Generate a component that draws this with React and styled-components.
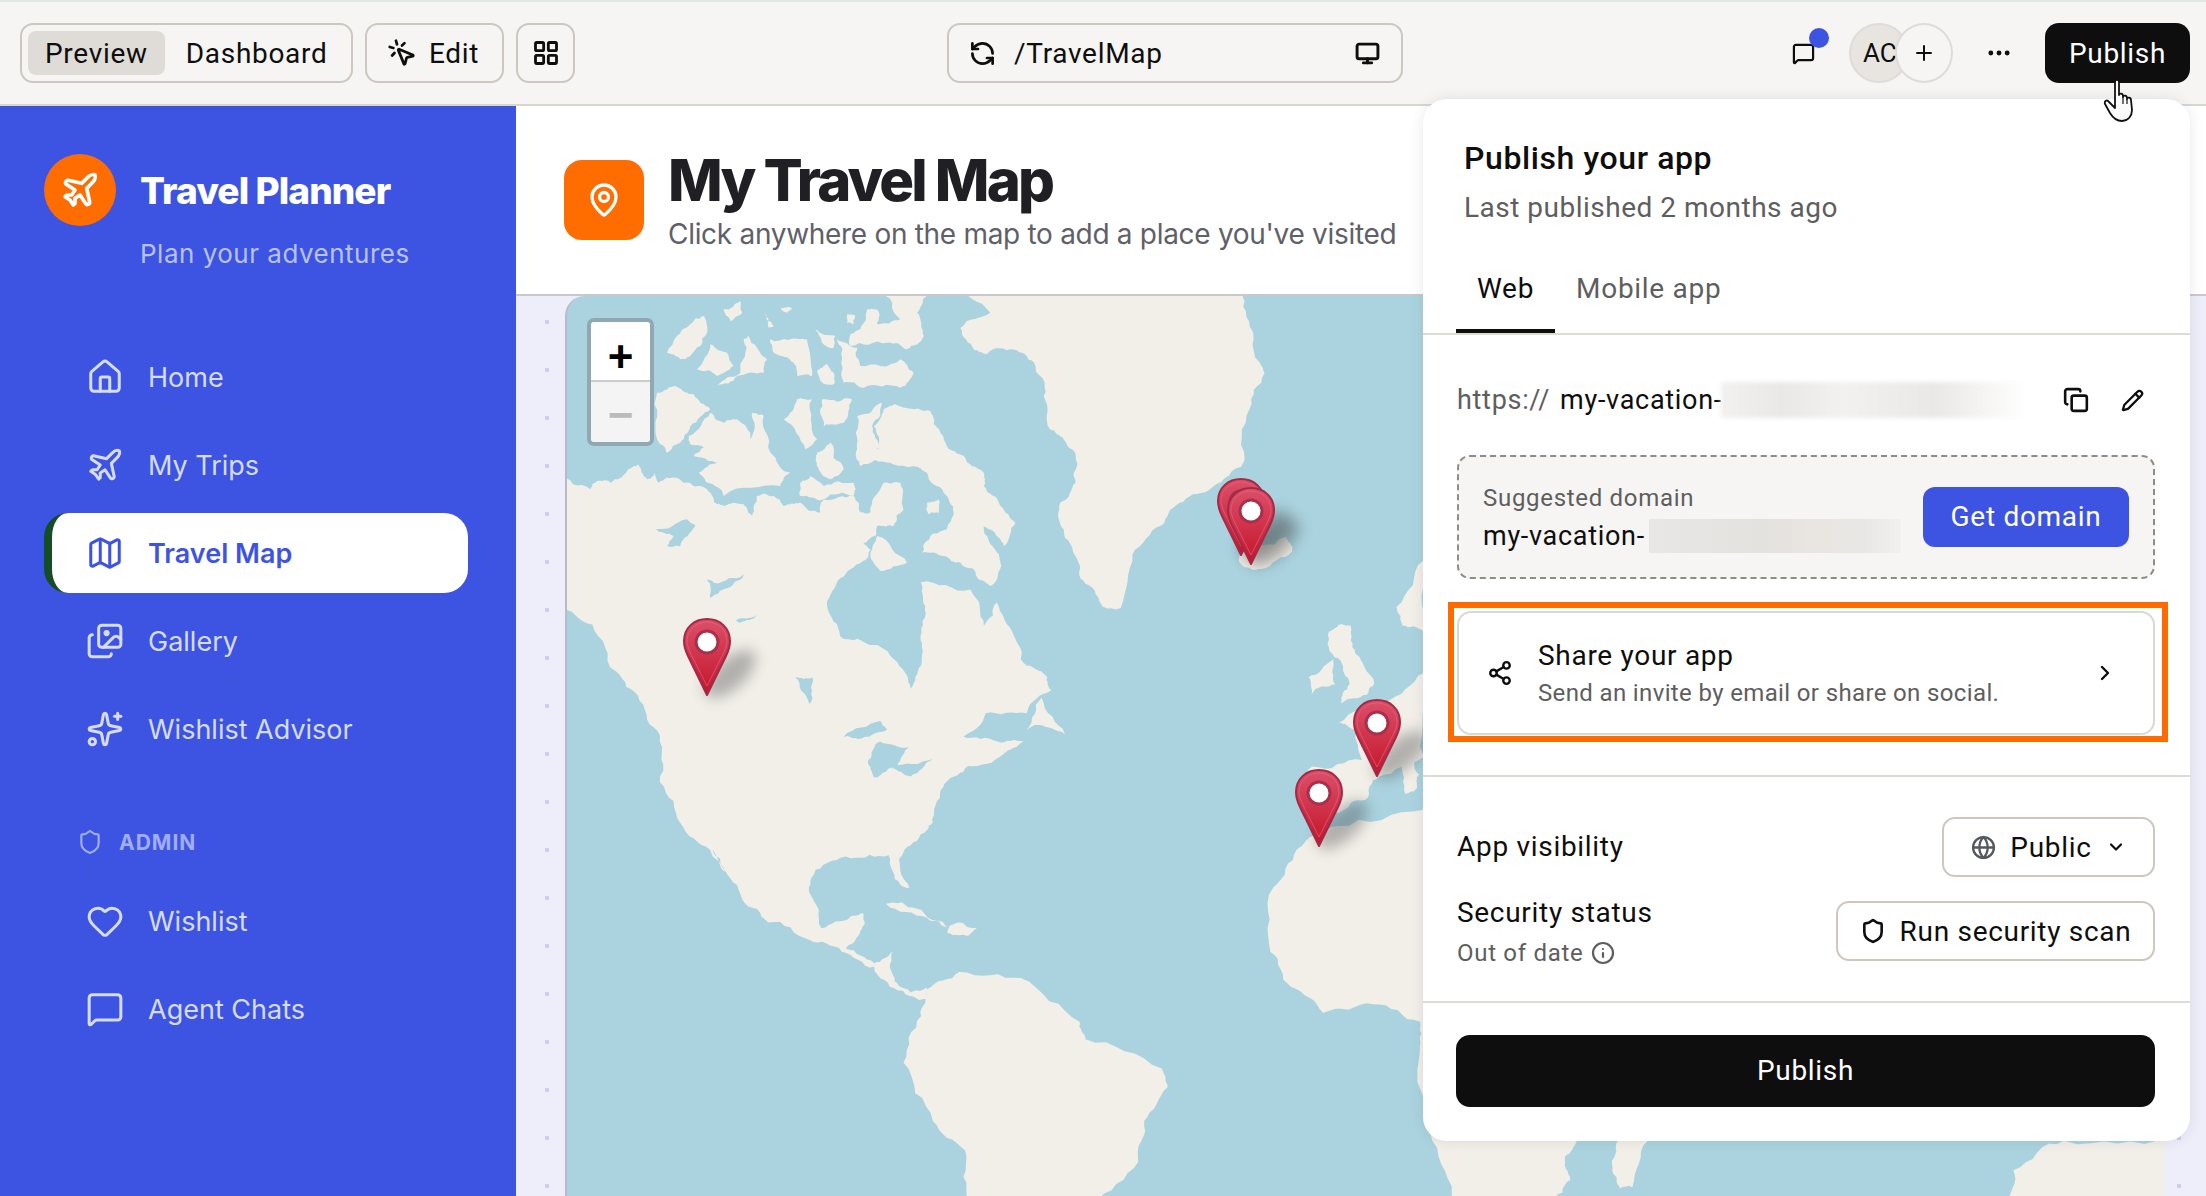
import React from "react"
import styled, { createGlobalStyle } from "styled-components"
import {
  ChevronDown, ChevronRight, Copy, Ellipsis, Globe, Heart, House, Images, Info, LayoutGrid, Map as MapIcon,
  MapPin, MessageSquare, Monitor, MousePointerClick, Pencil, Plane, Plus, RefreshCcw, Share2, Shield, Sparkles,
} from "lucide-react"

const Global = createGlobalStyle`
  html, body { margin: 0; height: 100%; background: #fff; overflow: hidden; }
  #root { height: 100%; }
  * { box-sizing: border-box; }
`

const UI = `"Roboto", "Liberation Sans", sans-serif`
const BRAND = `"Inter", "Liberation Sans", sans-serif`

// land shapes, traced in the coordinates of the map crop
const LAND = [
  "60,335 116,358 128,344 151,347 179,327 199,316 213,341 227,330 233,347 247,338 276,347 315,358 327,381 344,387 378,384 392,404 400,370 429,370 446,387 474,381 508,398 514,376 565,370 577,398 594,398 616,347 645,347 650,393 633,421 605,421 602,438 582,450 594,461 560,495 531,530 520,558 542,610 600,625 640,655 662,700 680,660 679,610 687,558 679,518 764,530 787,592 809,552 838,609 850,650 895,680 902,702 860,742 790,742 752,782 810,790 855,790 820,812 760,832 720,862 702,912 690,942 652,975 642,992 660,1040 645,1036 625,985 560,990 500,1010 490,1050 510,1110 560,1090 582,1085 575,1120 552,1145 600,1170 632,1150 632,1190 662,1220 690,1212 692,1232 660,1226 640,1216 600,1176 545,1150 490,1130 420,1100 375,1060 320,975 270,930 235,860 235,780 200,720 160,670 120,590 60,565",
  "690,1215 745,1185 850,1195 950,1270 960,1300 1090,1350 1100,1382 1060,1440 1050,1510 970,1580 760,1580 755,1490 700,1440 650,1340 680,1260",
  "730,10 1230,10 1240,80 1265,160 1240,220 1225,320 1170,360 1120,382 1090,420 1040,470 1020,562 990,560 960,520 946,478 923,427 917,381 943,347 946,313 923,273 900,256 889,199 872,141 838,119 792,127 770,119 747,82 798,56",
  "860,770 885,715 925,778 880,762",
  "620,1068 672,1076 730,1110 690,1092",
  "730,1105 775,1110 762,1122 725,1118",
  "1222,470 1300,440 1312,465 1260,495 1225,486",
  "1490,560 1536,480 1536,602 1500,592",
  "1375,602 1392,590 1412,592 1420,640 1452,690 1440,710 1395,725 1410,692 1395,652 1375,632",
  "1340,680 1382,650 1386,692 1345,710",
  "1536,673 1471,725 1391,759 1420,770 1431,822 1346,833 1320,879 1391,913 1437,890 1460,850 1536,816",
  "1390,935 1320,975 1280,1040 1275,1150 1310,1210 1365,1255 1450,1240 1530,1270 1530,1310 1551,1474 1585,1580 1755,1580 1786,1541 1777,1501 1798,1474 1850,1300 1900,1000 1536,907",
  "1867,1474 1918,1474 1892,1553 1871,1555 1858,1520",
  "2627,1474 2541,1524 2532,1580 2810,1580 2810,1474",
  "1495,825 1520,825 1525,870 1505,880",
]

// bays and lakes laid over the land
const WATER = [
  "325,975 375,1060 345,1010",
  "548,782 610,755 622,770 572,786",
  "590,822 610,790 660,800 640,832 600,852",
  "630,836 700,820 662,850",
  "465,680 495,680 490,726",
]

// arctic islands, traced closer in: one unit here is a third of a page pixel
const ARCTIC = [
  "985,325 1015,335 1090,345 1100,385 1130,430 1190,480 1250,530 1250,570 1300,630 1345,680 1310,750 1270,700 1250,690 1290,770 1300,800 1270,870 1220,820 1180,800 1130,780 1065,770 1070,745 1140,700 1160,650 1130,590 1080,530 1040,510 970,500 880,510 870,460 940,460 920,390 950,340",
  "870,360 945,320 915,390 940,460 870,460",
  "270,290 330,272 380,295 430,340 370,390 340,440 300,470 270,430",
  "365,420 430,350 470,380 510,370 550,430 555,350 590,360 620,480 670,530 640,570 470,600 420,560 395,530 470,500 380,480 410,455 370,445",
  "650,370 690,310 735,310 750,430 715,460",
  "765,310 855,310 830,380 790,385 770,390",
  "750,470 790,440 830,520 790,550 750,510",
  "700,560 730,540 770,570 860,560 860,600 770,610 700,600",
  "450,270 520,230 530,130 545,120 600,190 590,230 510,240",
  "390,220 430,145 480,170 500,210 450,240",
  "300,170 370,85 410,60 420,110 370,180 340,190",
  "470,40 520,15 525,50 490,75",
  "590,45 620,90 605,95",
  "640,35 675,35 660,50",
  "610,130 670,130 720,130 735,240 690,240 680,200 620,170",
  "745,100 805,120 800,155 765,140",
  "750,225 780,205 800,230 800,265 760,255",
  "810,130 870,155 880,210 1000,190 1040,230 1000,275 890,275 830,260 825,190",
  "850,115 880,100 900,40 930,40 930,85 1000,70 940,-20 1100,-20 1050,50 1070,120 1020,160 960,140 850,150",
  "840,55 865,60 860,85 840,80",
  "910,775 930,720 1020,800 940,825",
]

const ARCTIC_LAKES = [
  "1080,620 1115,610 1115,650 1085,655",
]

const CANADA_LAKES = [
  "265,700 360,670 385,690 340,750 300,750 320,720",
  "420,850 440,860 530,835 470,880 430,905",
  "505,975 570,955 520,980",
]

// fixed seed so the coastline comes out the same on every load
let seed = 41
const nextRandom = () => {
  seed = (seed * 1664525 + 1013904223) % 4294967296
  return seed / 4294967296 - 0.5
}

const roughen = (points, cap) => {
  let pts = points.split(" ").map((p) => p.split(",").map(Number))
  for (let round = 0; round < 3; round++) {
    const next = []
    pts.forEach(([x, y], i) => {
      const [nx, ny] = pts[(i + 1) % pts.length]
      const len = Math.hypot(nx - x, ny - y) || 1
      const shift = Math.min(len * 0.3, cap) * nextRandom()
      next.push([x, y], [(x + nx) / 2 + ((ny - y) / len) * shift, (y + ny) / 2 - ((nx - x) / len) * shift])
    })
    pts = next
  }
  return pts.map((p) => p.map((v) => v.toFixed(1)).join(",")).join(" ")
}

const LAND_SHAPES = LAND.map((p) => roughen(p, 14))
const WATER_SHAPES = WATER.map((p) => roughen(p, 6))
const ARCTIC_SHAPES = ARCTIC.map((p) => roughen(p, 26))
const ARCTIC_LAND_BITS = ARCTIC_LAKES.map((p) => roughen(p, 10))
const LAKE_SHAPES = CANADA_LAKES.map((p) => roughen(p, 14))

const PINS = [
  { x: 705, y: 696 },
  { x: 1239, y: 556 },
  { x: 1249, y: 565 },
  { x: 1375, y: 777 },
  { x: 1317, y: 847 },
]

const NAV_TOP = [
  { label: "Home", icon: House },
  { label: "My Trips", icon: Plane },
  { label: "Travel Map", icon: MapIcon, active: true },
  { label: "Gallery", icon: Images },
  { label: "Wishlist Advisor", icon: Sparkles },
]

const NAV_ADMIN = [
  { label: "Wishlist", icon: Heart },
  { label: "Agent Chats", icon: MessageSquare },
]

const Pin = ({ x, y }) => (
  <PinMark $x={x - 565 - 24} $y={y - 296 - 78} width="48" height="78" viewBox="0 0 48 78">
    <ellipse cx="47" cy="56" rx="32" ry="15" transform="rotate(-42 47 56)" fill="#3f3f3f" opacity=".36" filter="url(#pinBlur)" />
    <path d="M24 77 L5 38 C1 30 1 25 1 23 C1 10 11 1 24 1 C37 1 47 10 47 23 C47 25 47 30 43 38 Z" fill="url(#pinFill)" stroke="#a32a46" strokeWidth="2" strokeLinejoin="round" />
    <path d="M24 68 L8 36 C5 30 4 26 4 23 C4 12 13 4 24 4 C35 4 44 12 44 23 C44 26 43 30 40 36 Z" fill="none" stroke="#e56a80" strokeWidth="1" opacity=".6" />
    <circle cx="24" cy="24" r="11" fill="#fff" stroke="#a8304c" strokeWidth="3" />
  </PinMark>
)

const MapArt = () => (
  <MapSvg viewBox="76.7 27.4 2726 1541" preserveAspectRatio="none">
    <defs>
      <linearGradient id="pinFill" x1="0" y1="0" x2="0" y2="1">
        <stop offset="0" stopColor="#dc4f69" />
        <stop offset="1" stopColor="#c3152b" />
      </linearGradient>
      <filter id="pinBlur" x="-50%" y="-50%" width="200%" height="200%">
        <feGaussianBlur stdDeviation="7" />
      </filter>
      <filter id="soft">
        <feGaussianBlur stdDeviation="1" />
      </filter>
    </defs>
    <g filter="url(#soft)">
      {LAND_SHAPES.map((points) => <polygon key={points} points={points} fill="#f2efe9" />)}
      {WATER_SHAPES.map((points) => <polygon key={points} points={points} fill="#aad3df" />)}
      <g transform="translate(76.7 27.4) scale(0.568 0.5707)">
        {ARCTIC_SHAPES.map((points) => <polygon key={points} points={points} fill="#f2efe9" />)}
        {ARCTIC_LAND_BITS.map((points) => <polygon key={points} points={points} fill="#f2efe9" />)}
        {LAKE_SHAPES.map((points) => <polygon key={points} points={points} fill="#aad3df" />)}
      </g>
    </g>
  </MapSvg>
)

const App = () => (
  <Page>
    <Global />
    <TopBar>
      <BarLeft>
        <Segment>
          <SegmentItem $on>Preview</SegmentItem>
          <SegmentItem>Dashboard</SegmentItem>
        </Segment>
        <EditButton><MousePointerClick size={30} strokeWidth={2.2} />Edit</EditButton>
        <GridButton><LayoutGrid size={28} strokeWidth={2.4} /></GridButton>
      </BarLeft>
      <UrlBar>
        <RefreshCcw size={27} strokeWidth={2.4} />
        <UrlText>/TravelMap</UrlText>
        <Monitor size={25} strokeWidth={2.8} />
      </UrlBar>
      <BarRight>
        <ChatWrap>
          <MessageSquare size={23} strokeWidth={2.3} />
          <ChatDot />
        </ChatWrap>
        <Avatars>
          <Avatar>AC</Avatar>
          <AddAvatar><Plus size={24} strokeWidth={2} /></AddAvatar>
        </Avatars>
        <MoreButton><Ellipsis size={28} strokeWidth={2.2} /></MoreButton>
        <PublishTop>Publish</PublishTop>
      </BarRight>
    </TopBar>

    <Body>
      <Sidebar>
        <Brand>
          <BrandMark><Plane size={40} strokeWidth={2.2} color="#fff" /></BrandMark>
          <BrandName>Travel Planner</BrandName>
          <BrandTag>Plan your adventures</BrandTag>
        </Brand>
        <Nav>
          {NAV_TOP.map(({ label, icon: Icon, active }) => (
            <NavItem key={label} $active={active}><Icon size={38} strokeWidth={1.9} />{label}</NavItem>
          ))}
          <NavLabel><Shield size={26} strokeWidth={2} />ADMIN</NavLabel>
          {NAV_ADMIN.map(({ label, icon: Icon }) => (
            <NavItem key={label}><Icon size={38} strokeWidth={1.9} />{label}</NavItem>
          ))}
        </Nav>
      </Sidebar>

      <Main>
        <Header>
          <HeaderIcon><MapPin size={36} strokeWidth={2.2} color="#fff" /></HeaderIcon>
          <div>
            <Title>My Travel Map</Title>
            <Subtitle>Click anywhere on the map to add a place you've visited</Subtitle>
          </div>
        </Header>
        <Canvas>
          <MapFrame>
            <MapArt />
            {PINS.map((pin) => <Pin key={pin.x} {...pin} />)}
            <ZoomControl>
              <ZoomButton>+</ZoomButton>
              <ZoomButton $off>−</ZoomButton>
            </ZoomControl>
          </MapFrame>
        </Canvas>
      </Main>
    </Body>

    <Panel>
      <PanelTitle>Publish your app</PanelTitle>
      <PanelSub>Last published 2 months ago</PanelSub>
      <Tabs>
        <Tab $on>Web</Tab>
        <Tab>Mobile app</Tab>
      </Tabs>
      <PanelSection $top={45} $bottom={40}>
        <UrlRow>
          <UrlScheme>https://</UrlScheme>
          <UrlName>my-vacation-</UrlName>
          <UrlBlur />
          <UrlTools>
            <Copy size={26} strokeWidth={2.4} />
            <Pencil size={23} strokeWidth={2.4} />
          </UrlTools>
        </UrlRow>
        <DomainBox>
          <div>
            <DomainLabel>Suggested domain</DomainLabel>
            <DomainName>my-vacation-<DomainBlur /></DomainName>
          </div>
          <GetDomain>Get domain</GetDomain>
        </DomainBox>
        <ShareCard>
          <Highlight />
          <Share2 size={26} strokeWidth={2.2} />
          <ShareText>
            <ShareTitle>Share your app</ShareTitle>
            <ShareSub>Send an invite by email or share on social.</ShareSub>
          </ShareText>
          <ChevronRight size={24} strokeWidth={2.4} />
        </ShareCard>
      </PanelSection>
      <PanelSection $top={40} $bottom={32} $line>
        <SettingRow>
          <SettingName>App visibility</SettingName>
          <OutlineButton $w={213}>
            <Globe size={25} strokeWidth={2.2} color="#55585c" />Public<ChevronDown size={20} strokeWidth={2.6} />
          </OutlineButton>
        </SettingRow>
        <SecurityRow>
          <div>
            <SettingName>Security status</SettingName>
            <SettingNote>Out of date <Info size={24} strokeWidth={2.2} /></SettingNote>
          </div>
          <OutlineButton $w={319}>
            <Shield size={26} strokeWidth={2.4} />Run security scan
          </OutlineButton>
        </SecurityRow>
      </PanelSection>
      <PanelFoot>
        <PublishBig>Publish</PublishBig>
      </PanelFoot>
    </Panel>

    <HandCursor viewBox="0 0 36 44">
      <path d="M12 4 C12 1 16 1 16 4 L16 17 C16 15 20 15 20 18 L20 19 C20 17 24 17 24 20 L24 21 C24 19 28 19 28 22 L29 32 C29 38 25 43 19 43 C13 43 10 40 7 35 L2 26 C1 23 4 21 6 24 L12 30 Z" fill="#fbfbfb" stroke="#111" strokeWidth="1.8" strokeLinejoin="round" />
      <path d="M20 19 L20 26 M24 21 L24 26" stroke="#111" strokeWidth="1.2" fill="none" />
    </HandCursor>
  </Page>
)

export default App

const Page = styled.div`
  position: relative;
  display: flex;
  flex-direction: column;
  height: 100%;
  overflow: hidden;
  font-family: ${UI};
  letter-spacing: .7px;
  color: #0e0e0e;
`

const TopBar = styled.header`
  flex: 0 0 106px;
  display: flex;
  align-items: center;
  padding: 0 16px 0 20px;
  background: #f6f5f3;
  border-top: 2px solid #dfe9e3;
  border-bottom: 2px solid #d9d6d0;
  font-size: 28px;
`

const BarLeft = styled.div`
  flex: 0 0 927px;
  display: flex;
  align-items: center;
  gap: 12px;
`

const Segment = styled.div`
  display: flex;
  align-items: center;
  width: 333px;
  height: 60px;
  padding: 0 6px;
  border: 2px solid #cdc7bf;
  border-radius: 13px;
`

const SegmentItem = styled.div`
  height: 44px;
  line-height: 46px;
  padding: 0 ${(p) => (p.$on ? 17 : 21)}px;
  border-radius: 8px;
  background: ${(p) => (p.$on ? "#dfdcd7" : "transparent")};
`

const EditButton = styled.div`
  display: flex;
  align-items: center;
  gap: 12px;
  width: 139px;
  height: 60px;
  padding-left: 20px;
  border: 2px solid #cdc7bf;
  border-radius: 13px;
`

const GridButton = styled.div`
  display: flex;
  align-items: center;
  justify-content: center;
  width: 59px;
  height: 60px;
  border: 2px solid #cdc7bf;
  border-radius: 13px;
`

const UrlBar = styled.div`
  display: flex;
  align-items: center;
  width: 456px;
  height: 60px;
  padding: 0 21px 0 20px;
  border: 2px solid #cdc7bf;
  border-radius: 13px;
`

const UrlText = styled.span`
  flex: 1;
  margin-left: 18px;
`

const BarRight = styled.div`
  margin-left: auto;
  display: flex;
  align-items: center;
  gap: 30px;
`

const ChatWrap = styled.div`
  position: relative;
  display: flex;
  justify-content: center;
  width: 32px;
`

const ChatDot = styled.span`
  position: absolute;
  top: -14px;
  right: -10px;
  width: 20px;
  height: 20px;
  border-radius: 50%;
  background: #3d54e3;
`

const Avatars = styled.div`
  display: flex;
`

const Avatar = styled.div`
  width: 60px;
  height: 60px;
  line-height: 56px;
  padding-left: 12px;
  border-radius: 50%;
  background: #e8e5e0;
  border: 2px solid #dfdcd7;
  font-size: 26px;
  letter-spacing: 0;
`

const AddAvatar = styled.div`
  display: flex;
  align-items: center;
  justify-content: center;
  width: 58px;
  height: 60px;
  margin-left: -14px;
  border-radius: 50%;
  background: #f6f5f3;
  border: 2px solid #dfdcd7;
`

const MoreButton = styled.div`
  display: flex;
  justify-content: center;
  width: 32px;
`

const PublishTop = styled.div`
  width: 145px;
  height: 60px;
  line-height: 62px;
  text-align: center;
  border-radius: 14px;
  background: #0e0e0e;
  color: #fff;
`

const Body = styled.div`
  flex: 1;
  display: flex;
  min-height: 0;
`

const Sidebar = styled.aside`
  flex: 0 0 516px;
  padding: 48px 48px 0 44px;
  background: #3d54e3;
  font-family: ${BRAND};
`

const Brand = styled.div`
  display: grid;
  grid-template-columns: 72px 1fr;
  column-gap: 24px;
  align-items: center;
`

const BrandMark = styled.div`
  display: flex;
  align-items: center;
  justify-content: center;
  width: 72px;
  height: 72px;
  border-radius: 50%;
  background: #ff6d00;
`

const BrandName = styled.div`
  font-size: 37px;
  font-weight: 800;
  letter-spacing: -.9px;
  color: #fff;
  white-space: nowrap;
`

const BrandTag = styled.div`
  grid-column: 2;
  margin-top: 11px;
  font-size: 26px;
  line-height: 34px;
  letter-spacing: .5px;
  color: #b9c2f5;
  white-space: nowrap;
`

const Nav = styled.nav`
  display: flex;
  flex-direction: column;
  gap: 8px;
  margin-top: 66px;
`

const NavItem = styled.div`
  display: flex;
  align-items: center;
  gap: 24px;
  height: 80px;
  padding-left: 34px;
  border-left: 8px solid ${(p) => (p.$active ? "#154d24" : "transparent")};
  border-radius: 24px;
  background: ${(p) => (p.$active ? "#fff" : "transparent")};
  color: ${(p) => (p.$active ? "#3d54e3" : "#d6dcfb")};
  font-size: 27px;
  font-weight: ${(p) => (p.$active ? 600 : 400)};
  letter-spacing: 0;
`

const NavLabel = styled.div`
  display: flex;
  align-items: center;
  gap: 16px;
  height: 34px;
  margin: 48px 0 14px;
  padding-left: 33px;
  color: #a1adf4;
  font-size: 21px;
  font-weight: 700;
  letter-spacing: 1px;
`

const Main = styled.main`
  flex: 1;
  display: flex;
  flex-direction: column;
  min-width: 0;
`

const Header = styled.div`
  flex: 0 0 190px;
  display: flex;
  align-items: center;
  gap: 24px;
  padding-left: 48px;
  background: #fff;
  border-bottom: 2px solid #c9c9cb;
  font-family: ${BRAND};
`

const HeaderIcon = styled.div`
  display: flex;
  align-items: center;
  justify-content: center;
  width: 80px;
  height: 80px;
  border-radius: 18px;
  background: #ff6d00;
`

const Title = styled.h1`
  margin: 0;
  font-size: 58px;
  line-height: 64px;
  font-weight: 800;
  letter-spacing: -2.8px;
  color: #1f1f24;
`

const Subtitle = styled.p`
  margin: 4px 0 0;
  font-size: 28px;
  line-height: 36px;
  letter-spacing: -.3px;
  color: #5f6068;
  white-space: nowrap;
`

const Canvas = styled.div`
  flex: 1;
  display: flex;
  padding: 0 41px 0 49px;
  min-height: 0;
  background-color: #eeeefa;
  background-image: radial-gradient(circle, #c9cdf3 2px, transparent 2.5px);
  background-size: 48px 48px;
  background-position: 7px 2px;
`

const MapFrame = styled.div`
  position: relative;
  flex: 1;
  overflow: hidden;
  background: #aad3df;
  border-left: 2px solid #b9bcc6;
  border-top-left-radius: 20px;
`

const MapSvg = styled.svg`
  display: block;
  width: 1600px;
  height: 900px;
`

const PinMark = styled.svg`
  position: absolute;
  left: ${(p) => p.$x}px;
  top: ${(p) => p.$y}px;
  overflow: visible;
`

const ZoomControl = styled.div`
  position: absolute;
  left: 20px;
  top: 22px;
  width: 67px;
  border: 4px solid #8fa8b3;
  border-radius: 7px;
  overflow: hidden;
`

const ZoomButton = styled.div`
  height: ${(p) => (p.$off ? 62 : 58)}px;
  line-height: ${(p) => (p.$off ? 66 : 70)}px;
  text-align: center;
  font-family: "Liberation Sans", sans-serif;
  font-size: 44px;
  font-weight: 700;
  letter-spacing: 0;
  background: ${(p) => (p.$off ? "#f4f4f4" : "#fff")};
  color: ${(p) => (p.$off ? "#bbb" : "#000")};
  border-top: ${(p) => (p.$off ? "2px solid #ccc" : "none")};
`

const Panel = styled.section`
  position: absolute;
  top: 99px;
  right: 16px;
  width: 767px;
  height: 1042px;
  padding-top: 39px;
  background: #fff;
  border-radius: 24px;
  box-shadow: 0 0 14px rgba(40, 40, 60, .1);
  font-size: 27px;
`

const PanelTitle = styled.h2`
  margin: 0 0 0 41px;
  font-size: 32px;
  line-height: 40px;
  font-weight: 500;
  letter-spacing: .6px;
`

const PanelSub = styled.p`
  margin: 13px 0 0 41px;
  font-size: 28px;
  line-height: 34px;
  letter-spacing: .5px;
  color: #5e5e5e;
`

const Tabs = styled.div`
  display: flex;
  margin-top: 44px;
  padding-left: 33px;
  border-bottom: 2px solid #dedad5;
`

const Tab = styled.div`
  height: 64px;
  padding: 2px 21px 0;
  line-height: 36px;
  font-size: 28px;
  border-bottom: 4px solid ${(p) => (p.$on ? "#0e0e0e" : "transparent")};
  color: ${(p) => (p.$on ? "#0e0e0e" : "#5e5e5e")};
`

const PanelSection = styled.div`
  padding: ${(p) => p.$top}px 35px ${(p) => p.$bottom}px 34px;
  border-bottom: 2px solid #dedad5;
`

const UrlRow = styled.div`
  display: flex;
  align-items: center;
  height: 40px;
`

const UrlScheme = styled.span`
  color: #5e5e5e;
  margin-right: 10px;
`

const UrlName = styled.span`
  width: 161px;
  overflow: hidden;
  white-space: nowrap;
`

const UrlBlur = styled.span`
  width: 304px;
  height: 36px;
  background: linear-gradient(90deg, #f2f1f0, #e9e8e6 20%, #f2f1f0 40%, #e9e8e6 70%, #f4f3f2 85%, #fff);
  filter: blur(2px);
`

const UrlTools = styled.div`
  margin-left: auto;
  display: flex;
  align-items: center;
  gap: 32px;
  padding-right: 11px;
`

const DomainBox = styled.div`
  display: flex;
  align-items: center;
  justify-content: space-between;
  height: 124px;
  margin-top: 35px;
  padding: 0 24px;
  background: #f6f5f3;
  border: 2px dashed #8f8b85;
  border-radius: 13px;
`

const DomainLabel = styled.div`
  font-size: 24px;
  line-height: 30px;
  padding-top: 2px;
  color: #5e5e5e;
`

const DomainName = styled.div`
  display: flex;
  align-items: center;
  height: 34px;
  margin-top: 6px;
`

const DomainBlur = styled.span`
  width: 252px;
  height: 34px;
  margin-left: 4px;
  background: linear-gradient(90deg, #e8e7e5, #e4e2df 45%, #e9e5e0 65%, #e8e7e5 85%, #f1f0ee);
`

const GetDomain = styled.div`
  width: 206px;
  height: 60px;
  line-height: 60px;
  text-align: center;
  border-radius: 12px;
  background: #3d54e3;
  color: #fff;
  font-size: 28px;
`

const ShareCard = styled.div`
  position: relative;
  display: flex;
  align-items: center;
  height: 124px;
  margin-top: 32px;
  padding: 0 36px 0 28px;
  border: 2px solid #dcd8d2;
  border-radius: 14px;
`

const Highlight = styled.span`
  position: absolute;
  top: -11px;
  left: -11px;
  right: -15px;
  bottom: -9px;
  border: 6px solid #ff6b00;
`

const ShareText = styled.div`
  flex: 1;
  margin-left: 25px;
`

const ShareTitle = styled.div`
  font-size: 28px;
  line-height: 36px;
`

const ShareSub = styled.div`
  margin-top: 4px;
  font-size: 24px;
  line-height: 30px;
  letter-spacing: .36px;
  color: #5e5e5e;
`

const SettingRow = styled.div`
  display: flex;
  align-items: center;
  justify-content: space-between;
  height: 60px;
`

const SecurityRow = styled(SettingRow)`
  height: 76px;
  margin-top: 16px;
`

const SettingName = styled.div`
  font-size: 28px;
  line-height: 36px;
`

const SettingNote = styled.div`
  display: flex;
  align-items: center;
  gap: 8px;
  margin-top: 7px;
  font-size: 24px;
  line-height: 30px;
  color: #5e5e5e;
`

const OutlineButton = styled.div`
  display: flex;
  align-items: center;
  justify-content: center;
  gap: 14px;
  width: ${(p) => p.$w}px;
  height: 60px;
  border: 2px solid #cdc7bf;
  border-radius: 13px;
  font-size: 28px;
`

const PanelFoot = styled.div`
  padding: 32px 35px 34px 33px;
`

const PublishBig = styled.div`
  height: 72px;
  line-height: 72px;
  text-align: center;
  border-radius: 14px;
  background: #0e0e0e;
  color: #fff;
  font-size: 28px;
`

const HandCursor = styled.svg`
  position: absolute;
  top: 78px;
  right: 67px;
  width: 36px;
  height: 44px;
`
